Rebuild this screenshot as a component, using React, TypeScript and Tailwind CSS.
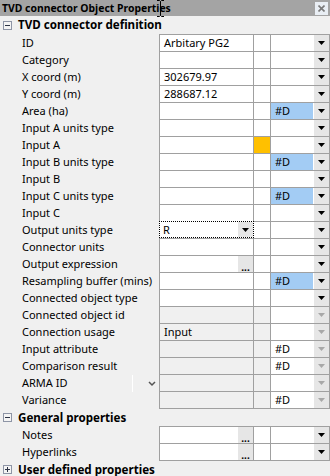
import React from "react";

type Row = {
  label: string;
  c1?: string;
  c3?: string;
  blue?: boolean;
  orange?: boolean;
  combo?: string;
  dots?: boolean;
  disabled?: boolean;
  chevron?: boolean;
};

const DEF_ROWS: Row[] = [
  { label: "ID", c1: "Arbitary PG2" },
  { label: "Category" },
  { label: "X coord (m)", c1: "302679.97" },
  { label: "Y coord (m)", c1: "288687.12" },
  { label: "Area (ha)", c3: "#D", blue: true },
  { label: "Input A units type" },
  { label: "Input A", orange: true },
  { label: "Input B units type", c3: "#D", blue: true },
  { label: "Input B" },
  { label: "Input C units type", c3: "#D", blue: true },
  { label: "Input C" },
  { label: "Output units type", combo: "R" },
  { label: "Connector units" },
  { label: "Output expression", dots: true },
  { label: "Resampling buffer (mins)", c3: "#D", blue: true },
  { label: "Connected object type" },
  { label: "Connected object id", disabled: true },
  { label: "Connection usage", c1: "Input", disabled: true },
  { label: "Input attribute", c3: "#D", disabled: true },
  { label: "Comparison result", c3: "#D", disabled: true },
  { label: "ARMA ID", disabled: true, chevron: true },
  { label: "Variance", c3: "#D", disabled: true },
];

const GENERAL_ROWS: Row[] = [
  { label: "Notes", dots: true },
  { label: "Hyperlinks", dots: true },
];

const FONT = { fontFamily: '"Noto Sans", "Open Sans", sans-serif' };

function Arrow({ dim }: { dim?: boolean }) {
  return (
    <svg width="7" height="4" viewBox="0 0 7 4">
      <path d="M0 0h7L3.5 4z" fill={dim ? "#a8a8a8" : "#000"} />
    </svg>
  );
}

function ToggleBox({ open }: { open: boolean }) {
  return (
    <div className="w-[9px] h-[9px] border border-[#8e95a6] bg-[#f4f4f4] flex items-center justify-center">
      <svg width="5" height="5" viewBox="0 0 5 5">
        <path d="M0 2.5h5" stroke="#2c3345" strokeWidth="1" />
        {!open && <path d="M2.5 0v5" stroke="#2c3345" strokeWidth="1" />}
      </svg>
    </div>
  );
}

function SectionHeader({ title, open, h }: { title: string; open: boolean; h: string }) {
  return (
    <div className={`flex items-center ${h} pl-[3px] gap-[6px]`}>
      <ToggleBox open={open} />
      <span className="font-bold text-[11.6px] text-black leading-none">{title}</span>
    </div>
  );
}

function PropRow({ row, last }: { row: Row; last?: boolean }) {
  const grey = row.disabled ? "bg-[#f0f0f0]" : "bg-white";
  return (
    <div className={`flex ${last ? "h-[18px]" : "h-[17px]"}`}>
      <div className="w-[159px] pl-[22px] pt-[1px] flex items-center text-[11px] text-black">
        <span>{row.label}</span>
        {row.chevron && (
          <>
            <div className="ml-auto mr-[15px] w-px h-[17px] bg-white" />
            <svg width="8" height="6" viewBox="0 0 8 6" className="mr-[3px] mt-[1px]">
              <path d="M1 1l3 3 3-3" stroke="#555" strokeWidth="1.5" fill="none" />
            </svg>
          </>
        )}
      </div>
      <div
        className={`flex w-[171px] border-t border-l border-r border-[#a0a0a0] ${
          last ? "border-b" : ""
        }`}
      >
        {row.combo ? (
          <div className="bg-white flex border border-dotted border-black -ml-px -mt-px h-[17px] w-[95px]">
            <span className="flex-1 pl-[3px] text-[11px] leading-[15px] text-black">{row.combo}</span>
            <div className="w-[16px] h-[15px] bg-[#e6e6e6] border-l border-white flex items-center justify-center">
              <Arrow />
            </div>
          </div>
        ) : (
          <div className={`w-[94px] border-r border-[#a0a0a0] ${grey} flex`}>
            <span className="flex-1 pl-[4px] text-[11px] leading-[16px] text-black">{row.c1}</span>
            {row.dots && (
              <div className="w-[16px] h-[16px] bg-[#e6e6e6] border-l border-white flex items-end justify-center text-[10px] leading-[10px] font-bold text-black">
                ...
              </div>
            )}
          </div>
        )}
        <div
          className={`w-[17px] border-r border-[#a0a0a0] ${
            row.orange ? "bg-[#ffc000]" : grey
          }`}
        />
        <div
          className={`w-[42px] ${row.blue ? "bg-[#a3ccf4]" : "bg-white"} pl-[4px] text-[11px] leading-[16px] text-black`}
        >
          {row.c3}
        </div>
        <div className="w-[16px] bg-[#e6e6e6] border-l border-white flex items-center justify-center">
          <Arrow dim={row.disabled} />
        </div>
      </div>
    </div>
  );
}

export default function App() {
  return (
    <div className="w-[330px] h-[476px] bg-[#f0f0f0] overflow-hidden relative" style={FONT}>
      {/* title bar */}
      <div className="h-[16px] bg-[#a4a4a4] flex items-center pl-[2px] relative">
        <span className="font-bold text-[10.4px] text-black leading-none whitespace-nowrap">
          TVD connector Object Properties
        </span>
        <div className="ml-auto mr-[2px] w-[13px] h-[13px] bg-[#e9eef4] flex items-center justify-center">
          <svg width="7" height="7" viewBox="0 0 7 7">
            <path d="M0.5 0.5l6 6M6.5 0.5l-6 6" stroke="#7a7a7a" strokeWidth="1.6" />
          </svg>
        </div>
        {/* mouse cursor */}
        <svg width="7" height="17" viewBox="0 0 7 17" className="absolute left-[157px] top-0">
          <path d="M0 0.5h2.5l1 1 1-1H7M3.5 1.5v14M0 16.5h2.5l1-1 1 1H7" stroke="#000" fill="none" />
        </svg>
      </div>

      <SectionHeader title="TVD connector definition" open h="h-[18px]" />
      {DEF_ROWS.map((r, i) => (
        <PropRow key={r.label} row={r} last={i === DEF_ROWS.length - 1} />
      ))}

      <SectionHeader title="General properties" open h="h-[17px]" />
      {GENERAL_ROWS.map((r, i) => (
        <PropRow key={r.label} row={r} last={i === GENERAL_ROWS.length - 1} />
      ))}

      <SectionHeader title="User defined properties" open={false} h="h-[17px]" />
    </div>
  );
}
